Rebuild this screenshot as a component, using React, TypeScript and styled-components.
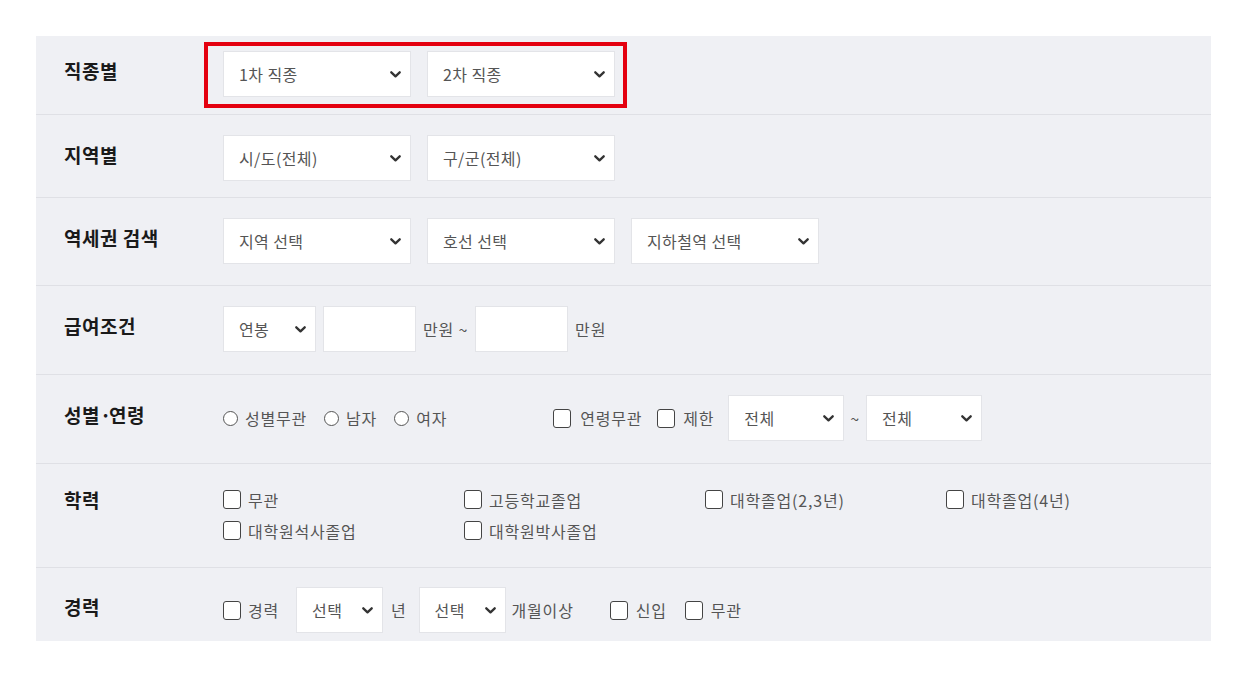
import React from 'react';
import styled, { createGlobalStyle } from 'styled-components';

const GlobalStyle = createGlobalStyle`
  body {
    margin: 0;
    background: #fff;
    font-family: "Noto Sans CJK KR", "Noto Sans", sans-serif;
  }
`;

const Page = styled.div`
  padding: 36px 36px 0 36px;
  width: 1175px;
`;

const Panel = styled.section`
  background: #eff0f4;
  height: 605px;
  overflow: hidden;
`;

const Row = styled.div<{ $pt?: number; $pb?: number }>`
  display: grid;
  grid-template-columns: 187px 1fr;
  padding-top: ${p => p.$pt ?? 20}px;
  padding-bottom: ${p => p.$pb ?? 21}px;
  border-bottom: 1px solid #dfe0e5;
`;

const Label = styled.div<{ $lh?: number }>`
  padding-left: 28px;
  font-size: 19px;
  font-weight: 700;
  color: #1a1a1a;
  letter-spacing: 0.5px;
  line-height: ${p => p.$lh ?? 40}px;
`;

const Dot = styled.span`
  display: inline-block;
  width: 9px;
  text-align: center;
  letter-spacing: 0;
`;

const Inline = styled.div<{ $gap?: number; $ml?: number }>`
  display: flex;
  align-items: center;
  gap: ${p => p.$gap ?? 0}px;
  margin-left: ${p => p.$ml ?? 0}px;
`;

const Highlighted = styled.div`
  position: relative;
  display: flex;
  gap: 16px;
`;

const Highlight = styled.div`
  position: absolute;
  left: -19px;
  top: -9px;
  right: -12px;
  bottom: -11px;
  border: 4px solid #e4000f;
  pointer-events: none;
`;

const SelectBox = styled.div<{ $w: number }>`
  width: ${p => p.$w}px;
  height: 46px;
  box-sizing: border-box;
  background: #fff;
  border: 1px solid #e3e4e8;
  display: flex;
  align-items: center;
  justify-content: space-between;
  padding: 0 9px 0 15px;
  font-size: 16px;
  color: #555;
  letter-spacing: 0.4px;
  cursor: pointer;
`;

const Field = styled.input<{ $w: number }>`
  width: ${p => p.$w}px;
  height: 46px;
  box-sizing: border-box;
  background: #fff;
  border: 1px solid #e3e4e8;
  outline: none;
  padding: 0 10px;
`;

const Text = styled.span`
  font-size: 16px;
  color: #555;
  letter-spacing: 0.8px;
  white-space: nowrap;
`;

const Option = styled.label<{ $gap?: number }>`
  display: inline-flex;
  align-items: center;
  gap: ${p => p.$gap ?? 7}px;
  font-size: 16px;
  color: #555;
  letter-spacing: 0.8px;
  white-space: nowrap;
  cursor: pointer;
`;

const Radio = styled.span`
  width: 13px;
  height: 13px;
  border: 1px solid #555;
  border-radius: 50%;
  background: #fff;
`;

const Check = styled.span`
  width: 16px;
  height: 17px;
  border: 1px solid #444;
  border-radius: 3px;
  background: #fff;
`;

const EduGrid = styled.div`
  display: grid;
  grid-template-columns: repeat(4, 241px);
  grid-auto-rows: 31px;
  align-items: center;
  letter-spacing: 0.5px;
`;

const Chevron = () => (
  <svg width="11" height="7" viewBox="0 0 11 7" fill="none">
    <path d="M1.3 1.3 L5.5 5.3 L9.7 1.3" stroke="#333" strokeWidth="2.3" strokeLinecap="round" strokeLinejoin="round" />
  </svg>
);

const Select: React.FC<{ w: number; children: React.ReactNode }> = ({ w, children }) => (
  <SelectBox $w={w}>
    <span>{children}</span>
    <Chevron />
  </SelectBox>
);

const educations = ['무관', '고등학교졸업', '대학졸업(2,3년)', '대학졸업(4년)', '대학원석사졸업', '대학원박사졸업'];

export default function App() {
  return (
    <>
      <GlobalStyle />
      <Page>
        <Panel>
          <Row $pt={15} $pb={17}>
            <Label>직종별</Label>
            <Inline>
              <Highlighted>
                <Select w={188}>1차 직종</Select>
                <Select w={188}>2차 직종</Select>
                <Highlight />
              </Highlighted>
            </Inline>
          </Row>

          <Row $pb={16}>
            <Label>지역별</Label>
            <Inline $gap={16}>
              <Select w={188}>시/도(전체)</Select>
              <Select w={188}>구/군(전체)</Select>
            </Inline>
          </Row>

          <Row>
            <Label>역세권 검색</Label>
            <Inline $gap={16}>
              <Select w={188}>지역 선택</Select>
              <Select w={188}>호선 선택</Select>
              <Select w={188}>지하철역 선택</Select>
            </Inline>
          </Row>

          <Row $pb={22}>
            <Label>급여조건</Label>
            <Inline $gap={7}>
              <Select w={93}>연봉</Select>
              <Field $w={93} />
              <Text>만원 ~</Text>
              <Field $w={93} />
              <Text>만원</Text>
            </Inline>
          </Row>

          <Row $pb={22}>
            <Label>성별<Dot>·</Dot>연령</Label>
            <Inline>
              <Inline $gap={17}>
                <Option $gap={7}><Radio />성별무관</Option>
                <Option $gap={7}><Radio />남자</Option>
                <Option $gap={7}><Radio />여자</Option>
              </Inline>
              <Inline $gap={15} $ml={106}>
                <Option $gap={9}><Check />연령무관</Option>
                <Option $gap={8}><Check />제한</Option>
              </Inline>
              <Inline $gap={6} $ml={14}>
                <Select w={116}>전체</Select>
                <Text>~</Text>
                <Select w={116}>전체</Select>
              </Inline>
            </Inline>
          </Row>

          <Row $pt={20} $pb={21}>
            <Label $lh={31}>학력</Label>
            <EduGrid>
              {educations.map(e => (
                <Option key={e}><Check />{e}</Option>
              ))}
            </EduGrid>
          </Row>

          <Row $pt={19}>
            <Label>경력</Label>
            <Inline>
              <Option><Check />경력</Option>
              <Inline $gap={8} $ml={17}>
                <Select w={87}>선택</Select>
                <Text>년</Text>
              </Inline>
              <Inline $gap={6} $ml={12}>
                <Select w={87}>선택</Select>
                <Text>개월이상</Text>
              </Inline>
              <Inline $gap={18} $ml={36}>
                <Option $gap={8}><Check />신입</Option>
                <Option $gap={8}><Check />무관</Option>
              </Inline>
            </Inline>
          </Row>
        </Panel>
      </Page>
    </>
  );
}
